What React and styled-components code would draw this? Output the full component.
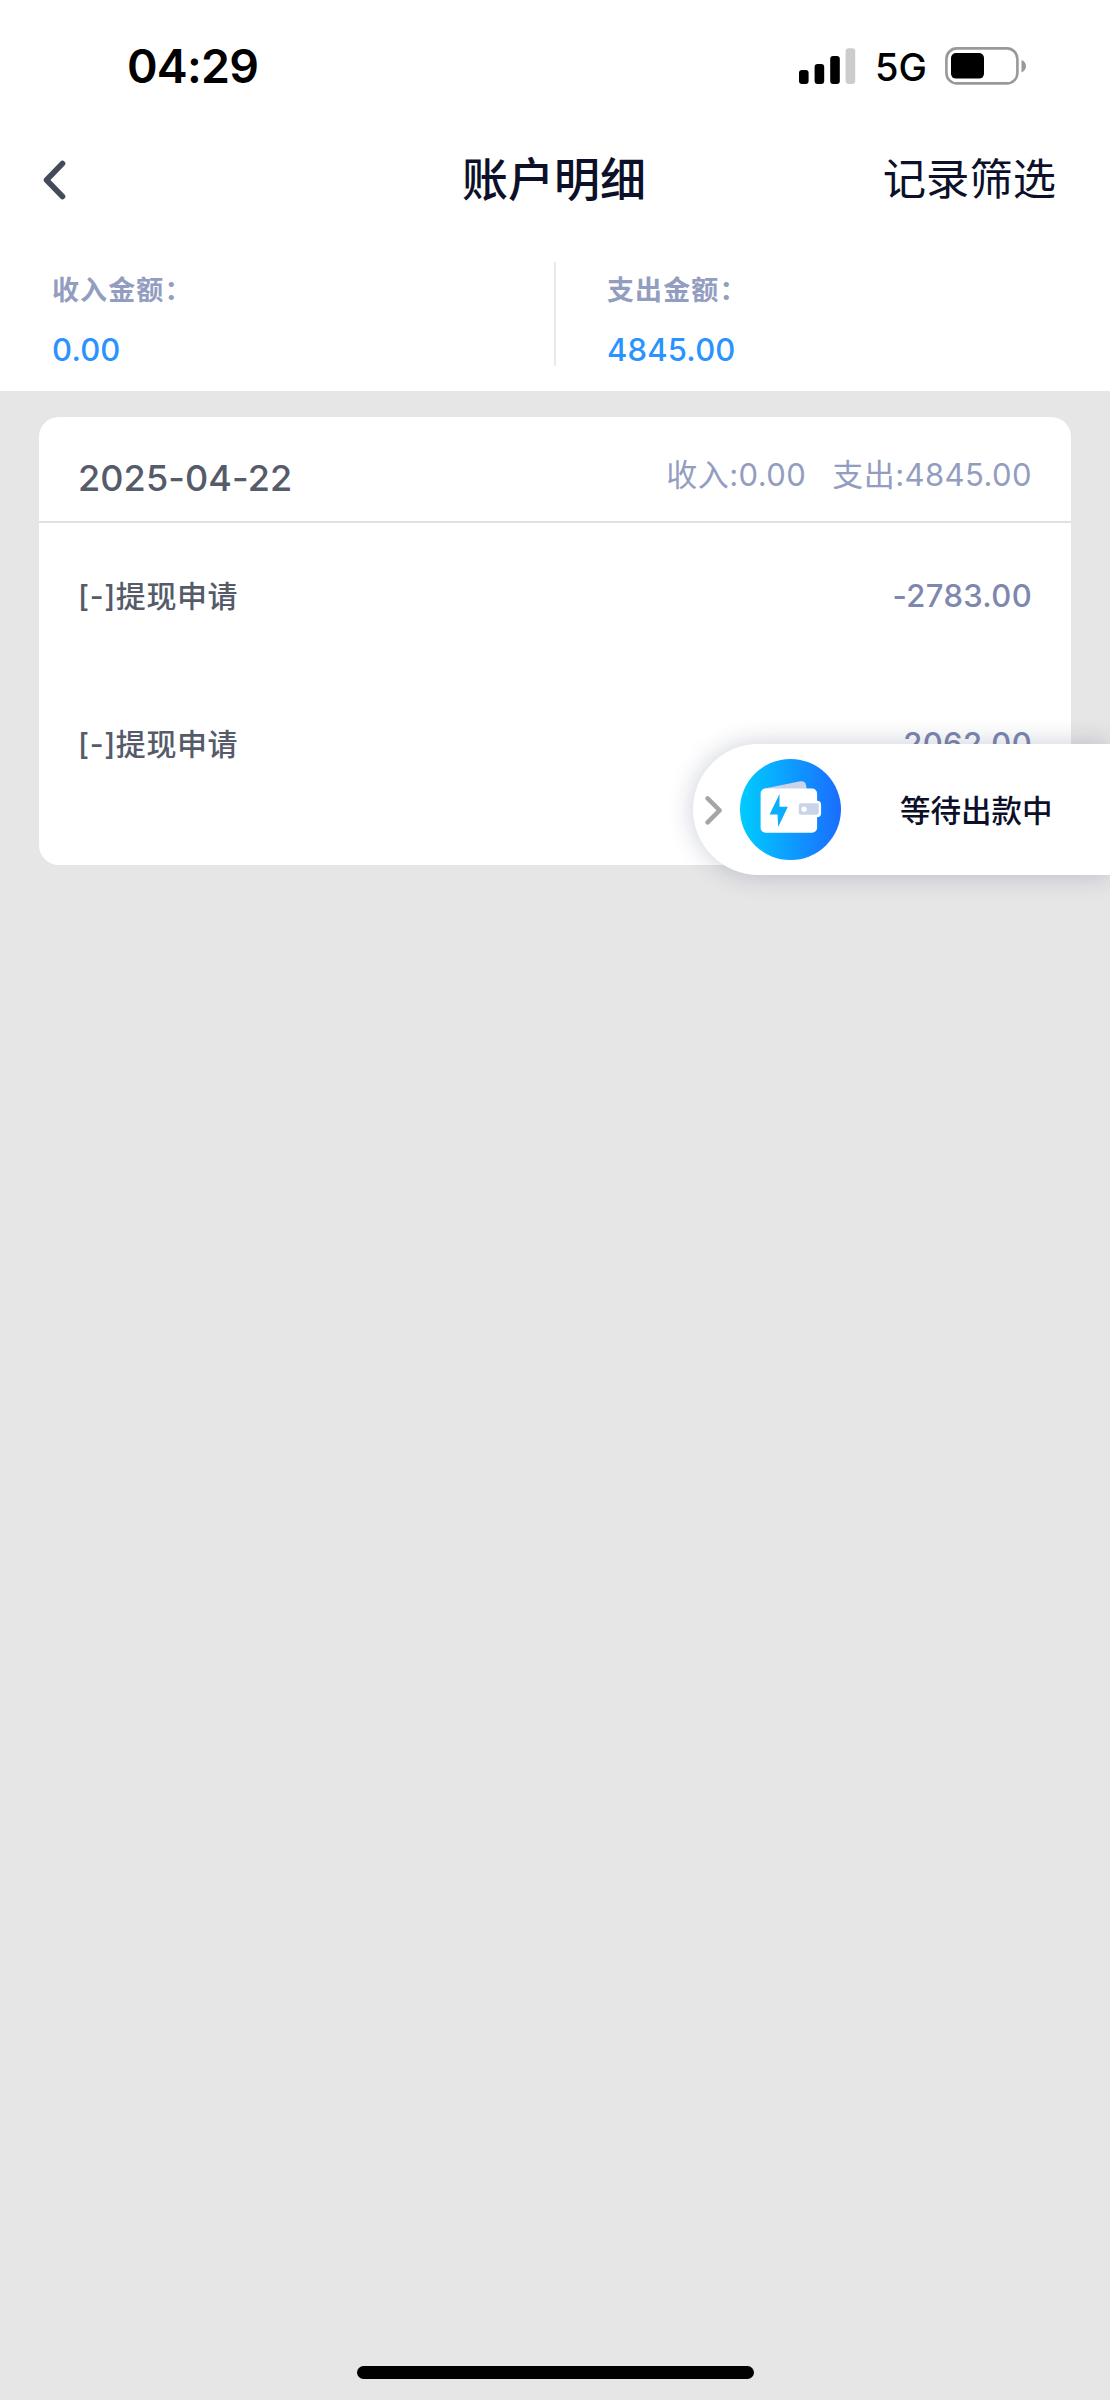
import React from "react";
import styled, { createGlobalStyle } from "styled-components";

const GlobalStyle = createGlobalStyle`
  * { box-sizing: border-box; }
  body {
    margin: 0;
    background: #e6e6e6;
    font-family: Inter, "Noto Sans CJK SC", sans-serif;
  }
`;

const Screen = styled.div`
  position: relative;
  display: flex;
  flex-direction: column;
  width: 1110px;
  height: 2400px;
  overflow: hidden;
  background: #e6e6e6;
`;

const Text = styled.span`
  display: block;
  white-space: nowrap;
  font-size: ${(p) => p.$size}px;
  line-height: ${(p) => p.$line}px;
  font-weight: ${(p) => p.$weight || 400};
  letter-spacing: ${(p) => p.$track || 0}px;
  color: ${(p) => p.$color};
`;

const StatusBar = styled.div`
  display: flex;
  align-items: center;
  justify-content: space-between;
  height: 134px;
  padding: 0 83px 1px 127px;
  background: #fff;
`;

const StatusIcons = styled.div`
  display: flex;
  align-items: center;

  svg {
    margin-bottom: 2px;
  }
`;

const Network = styled(Text)`
  margin: 1px 18px 0 19px;
`;

const NavBar = styled.header`
  display: grid;
  grid-template-columns: 1fr auto 1fr;
  align-items: center;
  height: 89px;
  padding: 0 54px 0 43px;
  background: #fff;
`;

const BackIcon = styled.svg`
  display: block;
  margin-top: 2px;
`;

const NavTitle = styled(Text)`
  margin-left: 9px;
`;

const NavAction = styled(Text)`
  justify-self: end;
  margin-top: 1px;
`;

const Summary = styled.section`
  display: flex;
  height: 168px;
  padding-top: 39px;
  background: #fff;
`;

const SummaryCell = styled.div`
  flex: 1;
  padding: 1px 0 0 52px;

  & + & {
    padding-left: 53px;
  }
`;

const Divider = styled.div`
  width: 2px;
  height: 104px;
  margin: 0 -1px;
  background: #e9e9e9;
`;

const Card = styled.section`
  margin: 26px 39px 0;
  padding-bottom: 46px;
  border-radius: 20px;
  background: #fff;
`;

const CardHeader = styled.div`
  display: flex;
  align-items: flex-start;
  justify-content: space-between;
  height: 106px;
  padding: 30px 39px 0;
  border-bottom: 2px solid #e1e1e2;
`;

const Totals = styled.div`
  display: flex;
  gap: 26px;
`;

const Row = styled.div`
  display: flex;
  align-items: center;
  justify-content: space-between;
  height: 148px;
  padding: 0 39px 2px;
`;

const FloatingPill = styled.div`
  position: absolute;
  top: 744px;
  right: 0;
  display: flex;
  align-items: center;
  width: 417px;
  height: 131px;
  padding-left: 12px;
  border-radius: 66px 0 0 66px;
  background: #fff;
  box-shadow: 0 0 26px rgba(20, 32, 80, 0.22);
`;

const WalletIcon = styled.svg`
  display: block;
  margin-left: 17px;
`;

const PillText = styled(Text)`
  margin: 3px 0 0 59px;
`;

const HomeIndicator = styled.div`
  align-self: center;
  width: 397px;
  height: 13px;
  margin: auto 0 21px;
  border-radius: 7px;
  background: #000;
`;

const Signal = () => (
  <svg width="57" height="38" viewBox="0 0 57 38">
    <rect x="0" y="23" width="9.6" height="14" rx="3" fill="#000" />
    <rect x="15.6" y="17" width="9.6" height="20" rx="3" fill="#000" />
    <rect x="31.2" y="9" width="9.6" height="28" rx="3" fill="#000" />
    <rect x="46.6" y="1.3" width="9.6" height="35.7" rx="3" fill="#ccc" />
  </svg>
);

const Battery = () => (
  <svg width="82" height="38" viewBox="0 0 82 38">
    <rect x="1.4" y="1.4" width="71" height="35" rx="10.5" fill="none" stroke="#999" strokeWidth="2.6" />
    <rect x="6" y="6" width="33" height="25.6" rx="5" fill="#000" />
    <path d="M76.5 13v12.4c6-2.4 6-10 0-12.4z" fill="#999" />
  </svg>
);

const summary = [
  { label: "收入金额：", value: "0.00" },
  { label: "支出金额：", value: "4845.00" },
];

const records = [
  { name: "[-]提现申请", amount: "-2783.00" },
  { name: "[-]提现申请", amount: "-2062.00" },
];

const totals = ["收入:0.00", "支出:4845.00"];

export default function App() {
  return (
    <>
      <GlobalStyle />
      <Screen>
        <StatusBar>
          <Text $size={46.5} $line={133} $weight={600} $track={-0.8} $color="#000">04:29</Text>
          <StatusIcons>
            <Signal />
            <Network $size={38} $line={46} $weight={500} $color="#000">5G</Network>
            <Battery />
          </StatusIcons>
        </StatusBar>
        <NavBar>
          <BackIcon width="24" height="40" viewBox="0 0 24 40">
            <path d="M19.5 3.5L3.5 20L19.5 36.5" fill="none" stroke="#444b59" strokeWidth="5.6" strokeLinecap="round" strokeLinejoin="round" />
          </BackIcon>
          <NavTitle $size={46} $line={60} $weight={500} $color="#0c1029">账户明细</NavTitle>
          <NavAction $size={43.3} $line={60} $color="#0c1029">记录筛选</NavAction>
        </NavBar>
        <Summary>
          {summary.map((s, i) => (
            <React.Fragment key={s.label}>
              {i > 0 && <Divider />}
              <SummaryCell>
                <Text $size={27} $line={56} $weight={600} $track={1.1} $color="#939dbf">{s.label}</Text>
                <Text $size={31} $line={62} $weight={500} $track={0.2} $color="#2b93ff">{s.value}</Text>
              </SummaryCell>
            </React.Fragment>
          ))}
        </Summary>
        <Card>
          <CardHeader>
            <Text $size={36} $line={62} $weight={500} $track={0.1} $color="#555b69">2025-04-22</Text>
            <Totals>
              {totals.map((t) => (
                <Text key={t} $size={31} $line={55} $track={0.43} $color="#939dbf">{t}</Text>
              ))}
            </Totals>
          </CardHeader>
          {records.map((r) => (
            <Row key={r.amount}>
              <Text $size={30} $line={60} $weight={500} $track={0.6} $color="#555b69">{r.name}</Text>
              <Text $size={31} $line={60} $weight={500} $track={0.35} $color="#7e88ae">{r.amount}</Text>
            </Row>
          ))}
        </Card>
        <FloatingPill>
          <svg width="18" height="32" viewBox="0 0 18 32">
            <path d="M2.6 4.4L14.6 16.4L2.6 28.4" fill="none" stroke="#a5a5a5" strokeWidth="4.4" strokeLinecap="round" strokeLinejoin="round" />
          </svg>
          <WalletIcon width="101" height="101" viewBox="180 87 304 304">
            <defs>
              <linearGradient id="wallet" x1="0" x2="1" y1="0" y2="0">
                <stop offset="0" stopColor="#00ccff" />
                <stop offset="1" stopColor="#1a6dff" />
              </linearGradient>
            </defs>
            <circle cx="332" cy="239" r="152" fill="url(#wallet)" />
            <path d="M258 175L362 154Q376 152 379 166L381 178H250Z" fill="#c9d3ea" />
            <rect x="242" y="176" width="170" height="133" rx="15" fill="#fff" />
            <rect x="351" y="213" width="73" height="49" rx="12" fill="#fff" />
            <rect x="357" y="220" width="60" height="35" rx="6" fill="#c9d3ea" />
            <circle cx="373" cy="238" r="8" fill="#fff" />
            <path d="M299 192L269 254H293L295 292L324 231H299Z" fill="#0aaeff" />
          </WalletIcon>
          <PillText $size={30.5} $line={60} $weight={500} $color="#0c1029">等待出款中</PillText>
        </FloatingPill>
        <HomeIndicator />
      </Screen>
    </>
  );
}
